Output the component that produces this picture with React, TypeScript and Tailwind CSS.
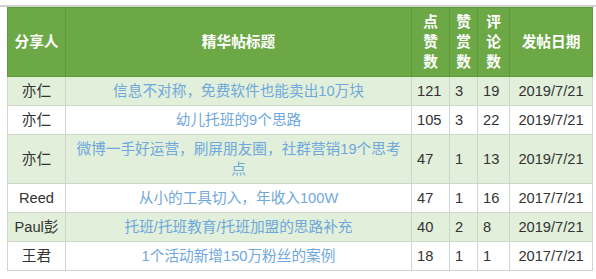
import React from "react";

type Row = { name: string; title: string; likes: number; rewards: number; comments: number; date: string };

const rows: Row[] = [
  { name: "亦仁", title: "信息不对称，免费软件也能卖出10万块", likes: 121, rewards: 3, comments: 19, date: "2019/7/21" },
  { name: "亦仁", title: "幼儿托班的9个思路", likes: 105, rewards: 3, comments: 22, date: "2019/7/21" },
  { name: "亦仁", title: "微博一手好运营，刷屏朋友圈，社群营销19个思考点", likes: 47, rewards: 1, comments: 13, date: "2019/7/21" },
  { name: "Reed", title: "从小的工具切入，年收入100W", likes: 47, rewards: 1, comments: 16, date: "2017/7/21" },
  { name: "Paul彭", title: "托班/托班教育/托班加盟的思路补充", likes: 40, rewards: 2, comments: 8, date: "2019/7/21" },
  { name: "王君", title: "1个活动新增150万粉丝的案例", likes: 18, rewards: 1, comments: 1, date: "2017/7/21" },
];

const font = { fontFamily: '"Liberation Sans", Arial, "Noto Sans CJK SC", sans-serif' };

export default function App() {
  return (
    <div className="w-[596px] h-[279px] bg-white" style={font}>
      <div className="pt-[5px]">
        <div className="h-[2px] bg-[#d0d0d0]" />
        <table className="ml-[7px] w-[585px] table-fixed border-collapse text-[14.67px] leading-[20px]">
          <colgroup>
            <col className="w-[58px]" />
            <col className="w-[346px]" />
            <col className="w-[38px]" />
            <col className="w-[28px]" />
            <col className="w-[32px]" />
            <col className="w-[83px]" />
          </colgroup>
          <thead>
            <tr className="bg-[#6ca946] text-white font-bold">
              <th className="h-[68px] border border-[#5e9a3c] px-[2px] py-[4px] text-center">分享人</th>
              <th className="border border-[#5e9a3c] px-[8px] py-[4px] text-center">精华帖标题</th>
              <th className="border border-[#5e9a3c] px-[5px] py-[4px] text-center break-all">点赞数</th>
              <th className="border border-[#5e9a3c] px-[5px] py-[4px] text-center break-all">赞赏数</th>
              <th className="border border-[#5e9a3c] px-[5px] py-[4px] text-center break-all">评论数</th>
              <th className="border border-[#5e9a3c] px-[4px] py-[4px] text-center">发帖日期</th>
            </tr>
          </thead>
          <tbody className="text-[#333333]">
            {rows.map((r, i) => (
              <tr key={i} className={i % 2 === 0 ? "bg-[#e2efda]" : "bg-white"}>
                <td className="border border-[#cfd4cc] px-[2px] py-[4px] text-center">{r.name}</td>
                <td className="border border-[#cfd4cc] px-[8px] py-[4px] text-center text-[#6fa8dc]">{r.title}</td>
                <td className="border border-[#cfd4cc] pl-[5px] pr-[2px] py-[4px] text-left">{r.likes}</td>
                <td className="border border-[#cfd4cc] pl-[5px] pr-[2px] py-[4px] text-left">{r.rewards}</td>
                <td className="border border-[#cfd4cc] pl-[5px] pr-[2px] py-[4px] text-left">{r.comments}</td>
                <td className="border border-[#cfd4cc] px-[4px] py-[4px] text-center">{r.date}</td>
              </tr>
            ))}
          </tbody>
        </table>
      </div>
    </div>
  );
}
